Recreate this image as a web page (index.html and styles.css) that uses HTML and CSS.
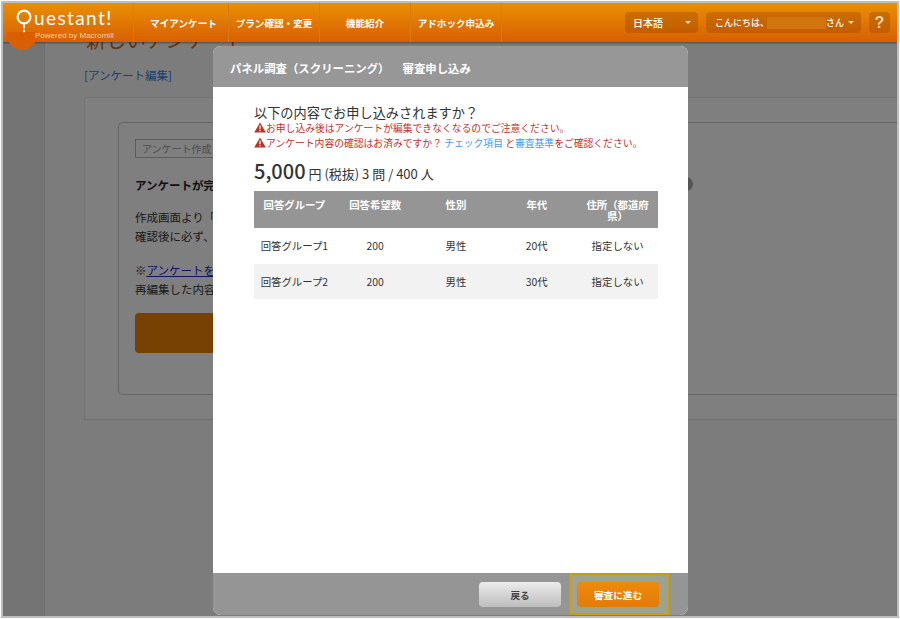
FILE: index.html
```html
<!DOCTYPE html>
<html lang="ja">
<head>
    <meta charset="UTF-8">
    <title>Questant</title>
    <link rel="stylesheet" href="styles.css">
</head>
<body>
<div class="frame">
    <header class="top-bar">
        <a class="logo">
            <svg class="logo-q" width="16" height="24" viewBox="0 0 16 24">
                <circle cx="8" cy="8" r="6.4" fill="none" stroke="#fff" stroke-width="2.2"/>
                <path d="M8 14.5v5" stroke="#fff" stroke-width="2"/>
                <circle cx="8" cy="22" r="1.2" fill="#fff"/>
            </svg>
            <span class="logo-word">uestant!</span>
            <span class="logo-sub">Powered by Macromill</span>
        </a>
        <nav class="top-nav">
            <a class="w1">マイアンケート</a>
            <a>プラン確認・変更</a>
            <a>機能紹介</a>
            <a>アドホック申込み</a>
        </nav>
        <div class="top-right">
            <div class="pill lang">日本語<i class="caret"></i></div>
            <div class="pill greet">こんにちは、<span class="blur-name"></span>さん<i class="caret"></i></div>
            <div class="pill help">?</div>
        </div>
    </header>

    <div class="page">
        <aside class="side"></aside>
        <main class="main">
            <h1>新しいアンケート</h1>
            <a class="edit-link">[アンケート編集]</a>
            <section class="outer-box">
                <div class="inner-box">
                    <span class="tag">アンケート作成</span>
                    <p class="done">アンケートが完</p>
                    <p class="copy">作成画面より「<br>確認後に必ず、</p>
                    <p class="copy note">※<a>アンケートを</a><br>再編集した内容</p>
                    <div class="big-btn"></div>
                </div>
            </section>
        </main>
    </div>

    <div class="overlay"></div>
    <div class="dot"></div>

    <div class="modal">
        <div class="modal-head">パネル調査（スクリーニング）<span class="head-gap">審査申し込み</span></div>
        <div class="modal-body">
            <p class="question">以下の内容でお申し込みされますか？</p>
            <p class="warn"><svg class="warn-icon" viewBox="0 0 12 11"><path d="M6 0.5 11.8 10.5H0.2Z" fill="#c0302a"/><path d="M6 3.6v3.6M6 8v1.3" stroke="#fff" stroke-width="1.2"/></svg>お申し込み後はアンケートが編集できなくなるのでご注意ください。</p>
            <p class="warn"><svg class="warn-icon" viewBox="0 0 12 11"><path d="M6 0.5 11.8 10.5H0.2Z" fill="#c0302a"/><path d="M6 3.6v3.6M6 8v1.3" stroke="#fff" stroke-width="1.2"/></svg>アンケート内容の確認はお済みですか？ <a>チェック項目</a> と<a>審査基準</a>をご確認ください。</p>
            <p class="price"><strong>5,000</strong> 円 (税抜) 3 問 / 400 人</p>
            <table class="groups">
                <thead>
                    <tr>
                        <th>回答グループ</th>
                        <th>回答希望数</th>
                        <th>性別</th>
                        <th>年代</th>
                        <th>住所（都道府県）</th>
                    </tr>
                </thead>
                <tbody>
                    <tr>
                        <td>回答グループ1</td>
                        <td>200</td>
                        <td>男性</td>
                        <td>20代</td>
                        <td>指定しない</td>
                    </tr>
                    <tr>
                        <td>回答グループ2</td>
                        <td>200</td>
                        <td>男性</td>
                        <td>30代</td>
                        <td>指定しない</td>
                    </tr>
                </tbody>
            </table>
        </div>
        <div class="modal-foot">
            <button class="btn btn-back">戻る</button>
            <button class="btn btn-next">審査に進む</button>
            <div class="highlight"></div>
        </div>
    </div>
</div>
</body>
</html>
```

FILE: styles.css
```css
* {
    box-sizing: border-box;
}
body {
    margin: 0;
    background: #fff;
    font-family: "Noto Sans CJK JP", "Noto Sans", sans-serif;
    color: #333;
    overflow: hidden;
}
p, h1 {
    margin: 0;
}
.frame {
    position: relative;
    width: 898px;
    height: 617px;
    margin: 1px;
    border: 2px solid #bdbdbd;
    overflow: hidden;
    display: flex;
    flex-direction: column;
}

/* Top bar */
.top-bar {
    position: relative;
    z-index: 3;
    flex: none;
    height: 39px;
    display: flex;
    align-items: stretch;
    background: linear-gradient(to bottom, #e98f03, #d95f02);
    box-shadow: 0 1px 2px rgba(0, 0, 0, 0.4);
}
.logo {
    position: relative;
    flex: none;
    width: 130px;
    color: #fff;
}
.logo::after {
    content: "";
    position: absolute;
    left: 4px;
    top: 29px;
    width: 30px;
    height: 18px;
    border-radius: 0 0 15px 15px;
    background: #d95f02;
    z-index: -1;
}
.logo-q {
    position: absolute;
    left: 13px;
    top: 6px;
}
.logo-word {
    position: absolute;
    left: 31px;
    top: 3px;
    font-family: "Lato", sans-serif;
    font-size: 19px;
    line-height: 24px;
    letter-spacing: 1.4px;
}
.logo-sub {
    position: absolute;
    left: 32px;
    top: 27px;
    font-family: "Liberation Sans", sans-serif;
    font-size: 8px;
    line-height: 11px;
    white-space: nowrap;
    color: #f5d0a0;
}
.top-nav {
    display: flex;
    border-left: 1px solid #d87a10;
}
.top-nav a {
    width: 91px;
    display: flex;
    align-items: center;
    justify-content: center;
    color: #fff;
    font-size: 9.6px;
    font-weight: 700;
    border-right: 1px solid #d87a10;
}
.top-nav .w1 {
    width: 95px;
    padding-left: 5px;
}
.top-right {
    margin-left: auto;
    margin-right: 7px;
    display: flex;
    align-items: center;
    gap: 8px;
}
.pill {
    height: 21px;
    display: flex;
    align-items: center;
    border-radius: 4px;
    background: rgba(150, 70, 0, 0.35);
    color: #fff;
    font-size: 10px;
    font-weight: 500;
    white-space: nowrap;
}
.lang {
    width: 73px;
    padding-left: 8px;
}
.greet {
    width: 155px;
    padding-left: 9px;
    font-size: 9px;
}
.blur-name {
    flex: none;
    width: 59px;
    height: 12px;
    margin-left: -2px;
    background: #d2740f;
}
.caret {
    margin-left: auto;
    margin-right: 7px;
    border-left: 3px solid transparent;
    border-right: 3px solid transparent;
    border-top: 3px solid #f6dcc0;
}
.help {
    width: 21px;
    justify-content: center;
    font-family: "Liberation Sans", sans-serif;
    font-size: 16px;
    font-weight: 700;
    color: #f2d2a8;
}

/* Page behind the dialog */
.page {
    flex: 1;
    display: flex;
    min-height: 0;
}
.side {
    flex: none;
    width: 42px;
    background: #e8e8e8;
    border-right: 1px solid #e0e0e0;
}
.main {
    flex: 1;
    min-width: 0;
    padding-left: 39px;
    background: #f8f8f8;
}
.main h1 {
    margin-left: 2px;
    height: 24px;
    margin-top: -14px;
    font-size: 20px;
    line-height: 24px;
    font-weight: 400;
    color: #d86a10;
}
.edit-link {
    display: block;
    margin-top: 13px;
    height: 20px;
    font-size: 11.5px;
    line-height: 20px;
    color: #2f7fe0;
}
.outer-box {
    margin-top: 12px;
    height: 323px;
    padding: 24px 0 0 33px;
    background: #fff;
    border: 1px solid #e6e6e6;
    border-right: 0;
    border-bottom-color: #ddd;
}
.inner-box {
    height: 273px;
    width: 900px;
    padding: 16px;
    border: 1px solid #ccc;
    border-right: 0;
    border-radius: 5px 0 0 5px;
}
.tag {
    display: block;
    width: 200px;
    height: 19px;
    padding: 0 6px;
    border: 1px solid #bbb;
    font-size: 10px;
    line-height: 17px;
    color: #999;
}
.done {
    margin-top: 17px;
    font-size: 11.5px;
    line-height: 20px;
    font-weight: 700;
    color: #222;
}
.copy {
    margin-top: 13px;
    font-size: 11.5px;
    line-height: 19px;
}
.note {
    margin-top: 15px;
}
.copy a {
    color: #2222cc;
    text-decoration: underline;
}
.big-btn {
    margin-top: 14px;
    width: 300px;
    height: 40px;
    border-radius: 4px;
    background: #ef8208;
}
.overlay {
    position: absolute;
    inset: 0;
    z-index: 1;
    background: rgba(0, 0, 0, 0.5);
}
.dot {
    position: absolute;
    z-index: 1;
    left: 676px;
    top: 174px;
    width: 14px;
    height: 14px;
    border-radius: 50%;
    background: #555;
}

/* Dialog */
.modal {
    position: absolute;
    z-index: 2;
    left: 210px;
    top: 43px;
    width: 475px;
    height: 569px;
    display: flex;
    flex-direction: column;
    border-radius: 8px;
    overflow: hidden;
    background: #fff;
}
.modal-head {
    flex: none;
    height: 41px;
    padding-left: 17px;
    background: #979797;
    color: #fff;
    font-size: 11.4px;
    font-weight: 700;
    line-height: 45px;
}
.head-gap {
    margin-left: 13px;
}
.modal-body {
    flex: 1;
    padding: 16px 30px 0 41px;
}
.question {
    height: 18px;
    font-size: 13.2px;
    line-height: 20px;
}
.warn {
    height: 14.5px;
    color: #c6302a;
    font-size: 9.8px;
    line-height: 14px;
    white-space: nowrap;
}
.warn a {
    color: #3f9bf0;
}
.warn-icon {
    width: 12px;
    height: 11px;
    vertical-align: -1px;
}
.price {
    margin-top: 7px;
    height: 28px;
    font-size: 13px;
    line-height: 28px;
}
.price strong {
    font-size: 20px;
    font-weight: 500;
}
.groups {
    width: 404px;
    margin-top: 6px;
    border-collapse: collapse;
    table-layout: fixed;
}
.groups th {
    height: 37px;
    padding: 8px 4px 0;
    background: #959595;
    color: #fff;
    font-size: 10.4px;
    line-height: 11px;
    font-weight: 700;
    text-align: center;
    vertical-align: top;
}
.groups td {
    height: 35.5px;
    padding: 0;
    font-size: 10.4px;
    text-align: center;
}
.groups tbody tr:nth-child(2) td {
    background: #f2f2f2;
}
.modal-foot {
    position: relative;
    flex: none;
    height: 42px;
    display: flex;
    align-items: center;
    justify-content: flex-end;
    gap: 16px;
    padding-right: 29px;
    padding-top: 1px;
    background: #959595;
}
.btn {
    position: relative;
    z-index: 1;
    width: 82px;
    height: 25px;
    padding: 0;
    border: none;
    border-radius: 4px;
    font-family: inherit;
    font-size: 9.6px;
    font-weight: 700;
}
.btn-back {
    background: linear-gradient(to bottom, #ececec, #bdbdbd);
    color: #444;
}
.btn-next {
    background: linear-gradient(to bottom, #ee8a0c, #e27c06);
    color: #fff;
}
.highlight {
    position: absolute;
    right: 19px;
    top: 1px;
    width: 100px;
    height: 41px;
    border: 2px solid #c8a208;
    background: rgba(200, 220, 120, 0.18);
    pointer-events: none;
}
```
